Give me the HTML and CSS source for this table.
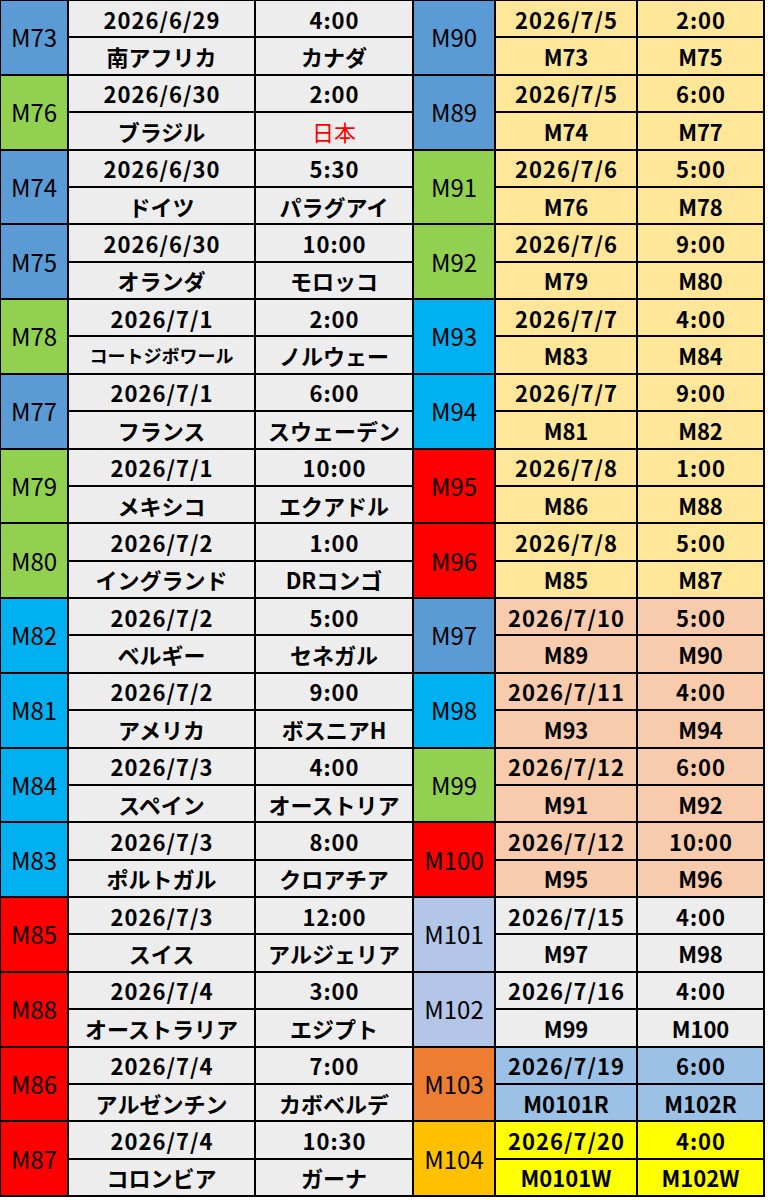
FILE: index.html
```html
<!DOCTYPE html>
<html lang="ja">
<head>
<meta charset="utf-8">
<title>Knockout schedule</title>
<link rel="stylesheet" href="styles.css">
</head>
<body>
<div class="sheet">
  <div class="lbl blue">M73</div><div class="c g n">2026/6/29</div><div class="c g n">4:00</div>
  <div class="lbl blue">M90</div><div class="c y n">2026/7/5</div><div class="c y n">2:00</div>
  <div class="c g">南アフリカ</div><div class="c g">カナダ</div>
  <div class="c y">M73</div><div class="c y">M75</div>

  <div class="lbl green">M76</div><div class="c g n">2026/6/30</div><div class="c g n">2:00</div>
  <div class="lbl blue">M89</div><div class="c y n">2026/7/5</div><div class="c y n">6:00</div>
  <div class="c g">ブラジル</div><div class="c g red-text">日本</div>
  <div class="c y">M74</div><div class="c y">M77</div>

  <div class="lbl blue">M74</div><div class="c g n">2026/6/30</div><div class="c g n">5:30</div>
  <div class="lbl green">M91</div><div class="c y n">2026/7/6</div><div class="c y n">5:00</div>
  <div class="c g">ドイツ</div><div class="c g">パラグアイ</div>
  <div class="c y">M76</div><div class="c y">M78</div>

  <div class="lbl blue">M75</div><div class="c g n">2026/6/30</div><div class="c g n">10:00</div>
  <div class="lbl green">M92</div><div class="c y n">2026/7/6</div><div class="c y n">9:00</div>
  <div class="c g">オランダ</div><div class="c g">モロッコ</div>
  <div class="c y">M79</div><div class="c y">M80</div>

  <div class="lbl green">M78</div><div class="c g n">2026/7/1</div><div class="c g n">2:00</div>
  <div class="lbl cyan">M93</div><div class="c y n">2026/7/7</div><div class="c y n">4:00</div>
  <div class="c g small">コートジボワール</div><div class="c g">ノルウェー</div>
  <div class="c y">M83</div><div class="c y">M84</div>

  <div class="lbl blue">M77</div><div class="c g n">2026/7/1</div><div class="c g n">6:00</div>
  <div class="lbl cyan">M94</div><div class="c y n">2026/7/7</div><div class="c y n">9:00</div>
  <div class="c g">フランス</div><div class="c g">スウェーデン</div>
  <div class="c y">M81</div><div class="c y">M82</div>

  <div class="lbl green">M79</div><div class="c g n">2026/7/1</div><div class="c g n">10:00</div>
  <div class="lbl red">M95</div><div class="c y n">2026/7/8</div><div class="c y n">1:00</div>
  <div class="c g">メキシコ</div><div class="c g">エクアドル</div>
  <div class="c y">M86</div><div class="c y">M88</div>

  <div class="lbl green">M80</div><div class="c g n">2026/7/2</div><div class="c g n">1:00</div>
  <div class="lbl red">M96</div><div class="c y n">2026/7/8</div><div class="c y n">5:00</div>
  <div class="c g">イングランド</div><div class="c g">DRコンゴ</div>
  <div class="c y">M85</div><div class="c y">M87</div>

  <div class="lbl cyan">M82</div><div class="c g n">2026/7/2</div><div class="c g n">5:00</div>
  <div class="lbl blue">M97</div><div class="c p n">2026/7/10</div><div class="c p n">5:00</div>
  <div class="c g">ベルギー</div><div class="c g">セネガル</div>
  <div class="c p">M89</div><div class="c p">M90</div>

  <div class="lbl cyan">M81</div><div class="c g n">2026/7/2</div><div class="c g n">9:00</div>
  <div class="lbl cyan">M98</div><div class="c p n">2026/7/11</div><div class="c p n">4:00</div>
  <div class="c g">アメリカ</div><div class="c g">ボスニアH</div>
  <div class="c p">M93</div><div class="c p">M94</div>

  <div class="lbl cyan">M84</div><div class="c g n">2026/7/3</div><div class="c g n">4:00</div>
  <div class="lbl green">M99</div><div class="c p n">2026/7/12</div><div class="c p n">6:00</div>
  <div class="c g">スペイン</div><div class="c g">オーストリア</div>
  <div class="c p">M91</div><div class="c p">M92</div>

  <div class="lbl cyan">M83</div><div class="c g n">2026/7/3</div><div class="c g n">8:00</div>
  <div class="lbl red">M100</div><div class="c p n">2026/7/12</div><div class="c p n">10:00</div>
  <div class="c g">ポルトガル</div><div class="c g">クロアチア</div>
  <div class="c p">M95</div><div class="c p">M96</div>

  <div class="lbl red">M85</div><div class="c g n">2026/7/3</div><div class="c g n">12:00</div>
  <div class="lbl peri">M101</div><div class="c g n">2026/7/15</div><div class="c g n">4:00</div>
  <div class="c g">スイス</div><div class="c g">アルジェリア</div>
  <div class="c g">M97</div><div class="c g">M98</div>

  <div class="lbl red">M88</div><div class="c g n">2026/7/4</div><div class="c g n">3:00</div>
  <div class="lbl peri">M102</div><div class="c g n">2026/7/16</div><div class="c g n">4:00</div>
  <div class="c g">オーストラリア</div><div class="c g">エジプト</div>
  <div class="c g">M99</div><div class="c g">M100</div>

  <div class="lbl red">M86</div><div class="c g n">2026/7/4</div><div class="c g n">7:00</div>
  <div class="lbl orange">M103</div><div class="c lb n">2026/7/19</div><div class="c lb n">6:00</div>
  <div class="c g">アルゼンチン</div><div class="c g">カボベルデ</div>
  <div class="c lb">M0101R</div><div class="c lb">M102R</div>

  <div class="lbl red">M87</div><div class="c g n">2026/7/4</div><div class="c g n">10:30</div>
  <div class="lbl gold">M104</div><div class="c yy n">2026/7/20</div><div class="c yy n">4:00</div>
  <div class="c g">コロンビア</div><div class="c g">ガーナ</div>
  <div class="c yy">M0101W</div><div class="c yy">M102W</div>
</div>
</body>
</html>
```
FILE: styles.css
```css
html, body {
  margin: 0;
  padding: 0;
  background: #ffffff;
}

.sheet {
  display: grid;
  width: 765px;
  height: 1197px;
  box-sizing: border-box;
  padding: 1px 2px 2px 1px;
  gap: 2px;
  grid-template-columns: 66px 185px 156px 80px 140px 125px;
  grid-template-rows: repeat(32, 1fr);
  background: #000000;
  font-family: "Noto Sans CJK JP", "Noto Sans", sans-serif;
  color: #000000;
}

.lbl {
  grid-row: span 2;
  display: flex;
  align-items: center;
  justify-content: center;
  font-size: 24px;
  font-weight: 400;
  line-height: 1;
}

.c {
  display: flex;
  align-items: center;
  justify-content: center;
  font-size: 22px;
  font-weight: 700;
  line-height: 1;
  white-space: nowrap;
  overflow: hidden;
}

.n {
  letter-spacing: 1px;
  padding-left: 1px;
}

.small { font-size: 18px; }
.red-text { color: #ff0000; font-weight: 400; }

.blue { background: #5b9bd5; }
.green { background: #92d050; }
.cyan { background: #00b0f0; }
.red { background: #ff0000; }
.peri { background: #b4c6e7; }
.orange { background: #ed7d31; }
.gold { background: #ffc000; }

.g { background: #ededed; }
.y { background: #ffe699; }
.p { background: #f8cbad; }
.lb { background: #9bc2e6; }
.yy { background: #ffff00; }
```
